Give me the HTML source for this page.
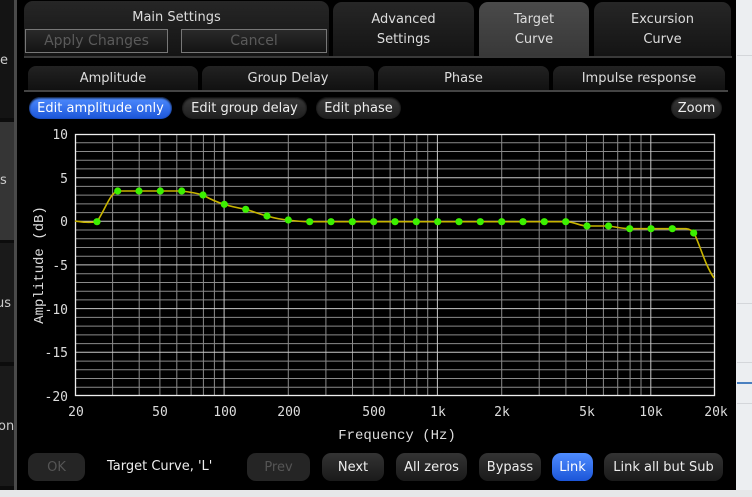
<!DOCTYPE html>
<html><head><meta charset="utf-8"><style>
*{margin:0;padding:0;box-sizing:border-box}
body{width:752px;height:497px;overflow:hidden;background:#eceef1;position:relative;font-family:"DejaVu Sans","Liberation Sans",sans-serif}
.a{position:absolute}
.main{left:17px;top:0;width:719px;height:490px;background:#000}
.tab{position:absolute;border-radius:9px 9px 0 0;background:linear-gradient(#262626,#141414);color:#ddd;font-size:13px;text-align:center;line-height:20px}
.sel{background:linear-gradient(#4a4a4a,#383838)}
.sub{position:absolute;top:66px;height:24px;border-radius:8px 8px 0 0;background:linear-gradient(#222,#111);color:#ddd;font-size:13px;text-align:center;line-height:26px}
.btn{position:absolute;height:22px;border-radius:11px;background:linear-gradient(#3a3a3a,#1e1e1e);color:#eee;font-size:13px;text-align:center;line-height:23px;box-shadow:0 1px 2px #000 inset}
.bb{position:absolute;top:453px;height:28px;border-radius:9px;background:linear-gradient(#333,#1a1a1a);color:#eee;font-size:13px;text-align:center;line-height:29px}
.dis{background:#252525;color:#555}
.blue{background:linear-gradient(#4f8cff,#1b55d8);color:#fff}
.ol{position:absolute;top:29px;height:24px;border:1px solid #777;background:linear-gradient(#2a2a2a,#141414);color:#5a5a5a;font-size:14px;text-align:center;line-height:23px}
</style></head><body>
<div class="a" style="left:0;top:0;width:17px;height:490px;background:#0c0c0c"></div>
<div class="a" style="left:0;top:0;width:14px;height:118px;background:#141414"></div>
<div class="a" style="left:0;top:122px;width:14px;height:118px;background:#353535"></div>
<div class="a" style="left:0;top:243px;width:14px;height:119px;background:#1a1a1a"></div>
<div class="a" style="left:0;top:366px;width:14px;height:120px;background:#1a1a1a"></div>
<div class="a" style="left:14px;top:0;width:3px;height:490px;background:#4a4a4a"></div>
<div class="a" style="left:0;top:53px;color:#ccc;font-size:13px">e</div>
<div class="a" style="left:0;top:173px;color:#ccc;font-size:13px">s</div>
<div class="a" style="left:-4px;top:296px;color:#ccc;font-size:13px">us</div>
<div class="a" style="left:-2px;top:419px;color:#ccc;font-size:13px">on</div>
<div class="a" style="left:737px;top:55px;width:15px;height:1px;background:#d4d6da"></div>
<div class="a" style="left:737px;top:303px;width:15px;height:1px;background:#d4d6da"></div>
<div class="a" style="left:737px;top:362px;width:15px;height:1px;background:#d4d6da"></div>
<div class="a" style="left:737px;top:382px;width:15px;height:2px;background:#4a80c0"></div>
<div class="a" style="left:737px;top:403px;width:15px;height:1px;background:#d4d6da"></div>
<div class="a main"></div>
<div class="tab" style="left:24px;top:1px;width:305px;height:55px;padding-top:7px">Main Settings</div>
<div class="ol" style="left:25px;width:143px">Apply Changes</div>
<div class="ol" style="left:181px;width:146px">Cancel</div>
<div class="tab" style="left:333px;top:2px;width:141px;height:54px;padding-top:8px">Advanced<br>Settings</div>
<div class="tab sel" style="left:479px;top:2px;width:110px;height:54px;padding-top:8px">Target<br>Curve</div>
<div class="tab" style="left:594px;top:2px;width:137px;height:54px;padding-top:8px">Excursion<br>Curve</div>
<div class="a" style="left:24px;top:56px;width:708px;height:2px;background:#3a3a3a"></div>
<div class="sub sel" style="left:28px;width:170px">Amplitude</div>
<div class="sub" style="left:202px;width:172px">Group Delay</div>
<div class="sub" style="left:378px;width:171px">Phase</div>
<div class="sub" style="left:553px;width:172px">Impulse response</div>
<div class="a" style="left:24px;top:90px;width:704px;height:2px;background:#444"></div>
<div class="btn blue" style="left:29px;top:97px;width:143px">Edit amplitude only</div>
<div class="btn" style="left:182px;top:97px;width:125px">Edit group delay</div>
<div class="btn" style="left:316px;top:97px;width:85px">Edit phase</div>
<div class="btn" style="left:671px;top:97px;width:51px">Zoom</div>
<svg class="a" style="left:0;top:0" width="752" height="497" font-family="'DejaVu Sans Mono','Liberation Mono',monospace" font-size="13" fill="#ddd">
<g stroke="#8a8a8a" stroke-width="1">
<path d="M75 142.7H715M75 151.5H715M75 160.2H715M75 168.9H715M75 186.4H715M75 195.1H715M75 203.9H715M75 212.6H715M75 230H715M75 238.8H715M75 247.5H715M75 256.2H715M75 273.7H715M75 282.5H715M75 291.2H715M75 299.9H715M75 317.4H715M75 326.1H715M75 334.9H715M75 343.6H715M75 361.1H715M75 369.8H715M75 378.5H715M75 387.3H715"/>
<path d="M112.6 134V396M139.2 134V396M159.9 134V396M176.8 134V396M191.1 134V396M203.4 134V396M214.4 134V396M288.3 134V396M325.9 134V396M352.5 134V396M373.2 134V396M390.1 134V396M404.4 134V396M416.8 134V396M427.7 134V396M501.7 134V396M539.2 134V396M565.9 134V396M586.5 134V396M603.4 134V396M617.7 134V396M630.1 134V396M641 134V396"/>
</g>
<g stroke="#c8c8c8" stroke-width="1">
<path d="M75 177.7H715M75 221.3H715M75 264.9H715M75 308.6H715M75 352.3H715M224.1 134V396M437.4 134V396M650.8 134V396"/>
</g>
<rect x="75.5" y="134.5" width="639" height="261" fill="none" stroke="#eee" stroke-width="1.3"/>
<path d="M75 221 C82 222,88 223,97 221.7 C105 210,110 193,117.7 191 L181.7 191 C190 192,196 193,203 195 C210 199,216 202,224.3 204.3 C232 207,238 208,245.7 209.3 C252 211,259 214,267 216 C274 218,281 219.5,288.3 220 C295 221,302 221.7,309.7 221.7 L566 221.7 C575 222,580 226,587 226 L609 226 C616 227,622 228.7,630 228.7 L686 228.7 C690 229,692 231,694 233 C700 245,705 265,714 278" fill="none" stroke="#c8b400" stroke-width="1.6"/>
<g fill="#3cf000">
<circle cx="97" cy="221.7" r="3.6"/><circle cx="117.7" cy="191" r="3.6"/><circle cx="139" cy="191" r="3.6"/><circle cx="160.3" cy="191" r="3.6"/><circle cx="181.7" cy="191" r="3.6"/><circle cx="203" cy="195" r="3.6"/><circle cx="224.3" cy="204.3" r="3.6"/><circle cx="245.7" cy="209.3" r="3.6"/><circle cx="267" cy="216" r="3.6"/><circle cx="288.3" cy="220" r="3.6"/><circle cx="309.7" cy="221.7" r="3.6"/><circle cx="331" cy="221.7" r="3.6"/><circle cx="352.3" cy="221.7" r="3.6"/><circle cx="373.7" cy="221.7" r="3.6"/><circle cx="395" cy="221.7" r="3.6"/><circle cx="416.3" cy="221.7" r="3.6"/><circle cx="437.7" cy="221.7" r="3.6"/><circle cx="459" cy="221.7" r="3.6"/><circle cx="480.3" cy="221.7" r="3.6"/><circle cx="501.7" cy="221.7" r="3.6"/><circle cx="523" cy="221.7" r="3.6"/><circle cx="544.3" cy="221.7" r="3.6"/><circle cx="565.7" cy="221.7" r="3.6"/><circle cx="587" cy="226" r="3.6"/><circle cx="608.5" cy="226" r="3.6"/><circle cx="629.7" cy="228.7" r="3.6"/><circle cx="651" cy="228.7" r="3.6"/><circle cx="672.3" cy="228.7" r="3.6"/><circle cx="693.7" cy="233" r="3.6"/>
</g>
<g text-anchor="end">
<text x="68" y="139">10</text><text x="68" y="183">5</text><text x="68" y="226">0</text><text x="68" y="270">-5</text><text x="68" y="314">-10</text><text x="68" y="357">-15</text><text x="68" y="401">-20</text>
</g>
<g text-anchor="middle">
<text x="76" y="416">20</text><text x="160" y="416">50</text><text x="225" y="416">100</text><text x="289" y="416">200</text><text x="374" y="416">500</text><text x="438" y="416">1k</text><text x="502" y="416">2k</text><text x="587" y="416">5k</text><text x="651" y="416">10k</text><text x="716" y="416">20k</text>
<g font-family="'Liberation Mono',monospace" font-size="14">
<text x="397" y="439">Frequency (Hz)</text>
<text x="0" y="0" transform="translate(43 265) rotate(-90)">Amplitude (dB)</text>
</g>
</g>
</svg>
<div class="bb dis" style="left:28px;width:57px">OK</div>
<div class="a" style="left:107px;top:459px;color:#eee;font-size:13px">Target Curve, 'L'</div>
<div class="bb dis" style="left:247px;width:63px">Prev</div>
<div class="bb" style="left:322px;width:62px">Next</div>
<div class="bb" style="left:396px;width:71px">All zeros</div>
<div class="bb" style="left:479px;width:62px">Bypass</div>
<div class="bb blue" style="left:552px;width:41px">Link</div>
<div class="bb" style="left:604px;width:119px">Link all but Sub</div>
<div class="a" style="left:0;top:490px;width:752px;height:7px;background:#e6e7e9"></div>
</body></html>
